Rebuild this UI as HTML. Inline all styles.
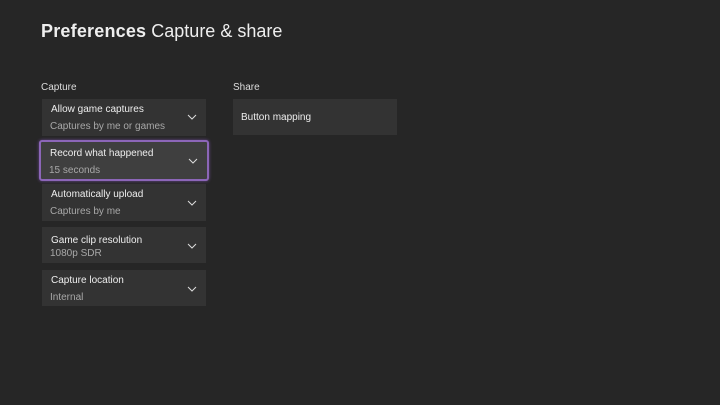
<!DOCTYPE html><html><head><style>
body{margin:0;width:720px;height:405px;background:#262626;font-family:"Liberation Sans",sans-serif;color:#eee;position:relative;overflow:hidden}
.a{position:absolute}
.t{left:41px;top:21px;font-size:18px;white-space:nowrap}
.t b{font-weight:bold;letter-spacing:0.2px}
.lbl{font-size:10px;color:#ddd}
.c{position:absolute;background:#333;width:164px}
.c .m{position:absolute;left:9px;font-size:10px;color:#eee;white-space:nowrap}
.c .s{position:absolute;left:8px;font-size:10px;color:#a8a8a8;white-space:nowrap}
.c svg{position:absolute;right:9px}
.f{background:#3f3f3f;border:2px solid #8c66b8;border-radius:3px;box-shadow:0 0 3px #6a4a90}
</style></head><body>
<div class="a t"><b>Preferences</b> Capture &amp; share</div>
<div class="a lbl" style="left:41px;top:82px">Capture</div>
<div class="a lbl" style="left:233px;top:82px">Share</div>
<div class="c" style="left:42px;top:99px;height:37px"><div class="m" style="top:5px">Allow game captures</div><div class="s" style="top:22px">Captures by me or games</div><svg width="10" height="6" style="top:15px" viewBox="0 0 10 6"><path d="M1 1L5 5L9 1" stroke="#ddd" fill="none"/></svg></div>
<div class="c f" style="left:39px;top:140px;height:37px;width:166px"><div class="m" style="top:6px">Record what happened</div><div class="s" style="top:23px">15 seconds</div><svg width="10" height="6" style="top:16px" viewBox="0 0 10 6"><path d="M1 1L5 5L9 1" stroke="#ddd" fill="none"/></svg></div>
<div class="c" style="left:42px;top:184px;height:37px"><div class="m" style="top:5px">Automatically upload</div><div class="s" style="top:22px">Captures by me</div><svg width="10" height="6" style="top:16px" viewBox="0 0 10 6"><path d="M1 1L5 5L9 1" stroke="#ddd" fill="none"/></svg></div>
<div class="c" style="left:42px;top:227px;height:36px"><div class="m" style="top:8px">Game clip resolution</div><div class="s" style="top:21px">1080p SDR</div><svg width="10" height="6" style="top:16px" viewBox="0 0 10 6"><path d="M1 1L5 5L9 1" stroke="#ddd" fill="none"/></svg></div>
<div class="c" style="left:42px;top:270px;height:36px"><div class="m" style="top:5px">Capture location</div><div class="s" style="top:22px">Internal</div><svg width="10" height="6" style="top:16px" viewBox="0 0 10 6"><path d="M1 1L5 5L9 1" stroke="#ddd" fill="none"/></svg></div>
<div class="c" style="left:233px;top:99px;height:36px"><div class="m" style="top:13px;left:8px">Button mapping</div></div>
</body></html>
